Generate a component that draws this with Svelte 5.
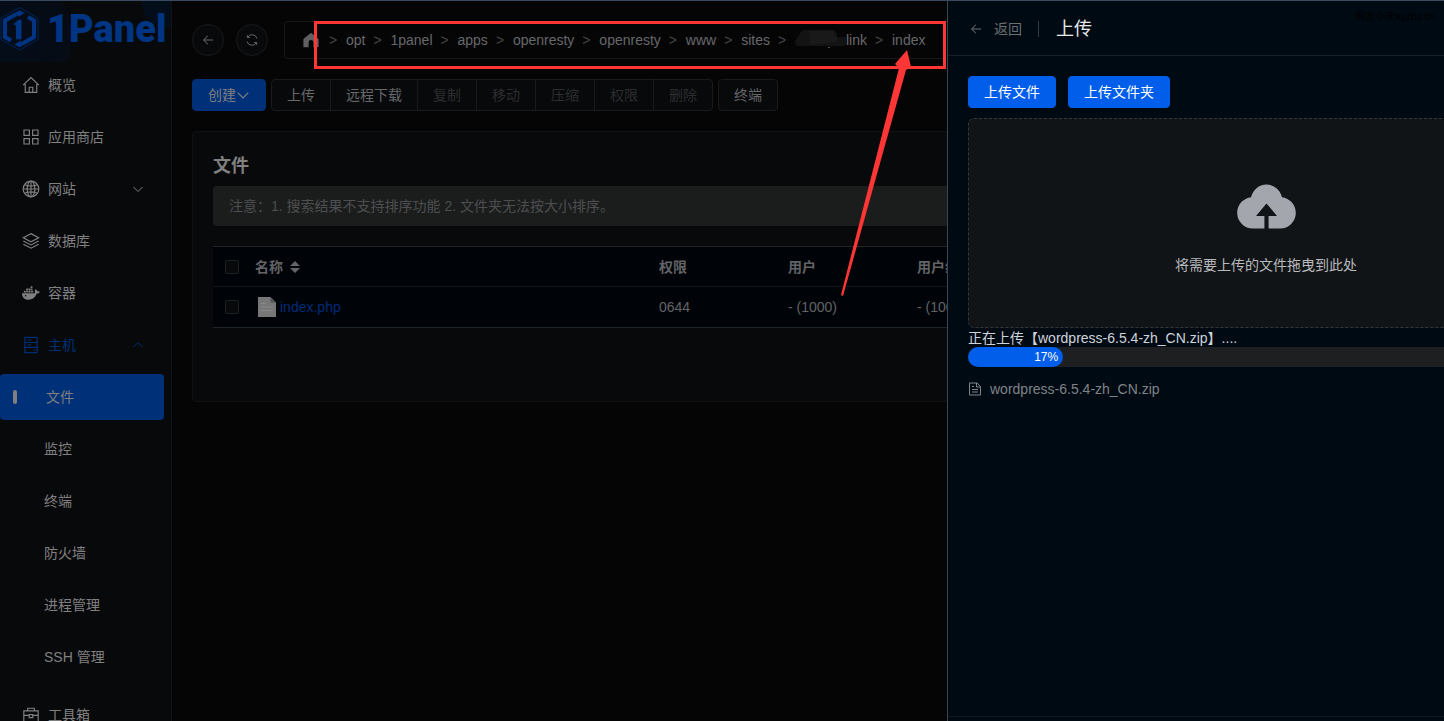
<script>
  const menu = [
    { icon: 'home', label: '概览' },
    { icon: 'grid', label: '应用商店' },
    { icon: 'globe', label: '网站', arrow: 'down' },
    { icon: 'layers', label: '数据库' },
    { icon: 'docker', label: '容器' },
    { icon: 'server', label: '主机', arrow: 'up', open: true }
  ];
  const submenu = ['文件', '监控', '终端', '防火墙', '进程管理', 'SSH 管理'];
  const crumbs = ['opt', '1panel', 'apps', 'openresty', 'openresty', 'www', 'sites', 'link', 'index'];
  const actions = [
    { label: '上传', on: true },
    { label: '远程下载', on: true },
    { label: '复制' },
    { label: '移动' },
    { label: '压缩' },
    { label: '权限' },
    { label: '删除' }
  ];
  const files = [{ name: 'index.php', mode: '0644', user: '- (1000)', group: '- (1000)' }];
  const progress = 17;
  const uploading = 'wordpress-6.5.4-zh_CN.zip';
</script>

{#snippet menuIcon(name)}
  <svg class="menu-icon" viewBox="0 0 20 20" fill="none" stroke="currentColor" stroke-width="1.3" aria-hidden="true">
    {#if name === 'home'}
      <path d="M1.2 10.2 10 1.8l8.800 8.400M3.600 9v9.200h12.800V9M8 18v-5.500h4V18" />
    {:else if name === 'grid'}
      <path d="M2.200 2.200h6v6h-6zM11.800 2.200h6v6h-6zM2.200 11.800h6v6h-6zM11.800 11.800h6v6h-6z" />
    {:else if name === 'globe'}
      <circle cx="10" cy="10" r="8.700" />
      <ellipse cx="10" cy="10" rx="4.300" ry="8.700" />
      <path d="M10 1.300v17.400M1.300 10h17.400M2.900 5.300c4 1.600 10.200 1.600 14.200 0M2.900 14.700c4-1.600 10.200-1.600 14.200 0" />
    {:else if name === 'layers'}
      <path d="m10 1.800 8.500 4.500-8.500 4.500-8.500-4.500zM1.500 10l8.500 4.400 8.500-4.400M1.500 13.500 10 18l8.500-4.500" />
    {:else if name === 'docker'}
      <path fill="currentColor" stroke="none" d="M0 10.200h14.600c-.7-1.300-.5-2.600 0-3.600l.8-.9c1 .6 1.500 1.400 1.700 2.400 1.100-.2 2.200 0 2.900.6-.7 1.500-2 2-3.600 1.900C14.600 15.300 11.500 17.500 7.300 17.500 2.500 17.500 0 14.600 0 10.200zM2 7.400h2.200v2.100H2zM4.700 7.400h2.200v2.100H4.700zM7.400 7.400h2.200v2.100H7.400zM10.100 7.400h2.200v2.100h-2.200zM4.700 4.900h2.200V7H4.700zM7.400 4.900h2.200V7H7.400zM10.100 4.900h1.500V7h-1.500zM9.600 2.400h2v2.100h-2z" />
      <circle cx="4" cy="13" r=".9" fill="#08090b" stroke="none" />
    {:else if name === 'server'}
      <path d="M3.200 1.500h13.600v17H3.200zM3.200 7.200h13.600M3.200 12.700h13.600M6 4.400h4.500M6 10h4.500M13 15.700h1.800" />
    {:else}
      <path d="M2 5.500h16v13H2zM6.300 5.500v-3h7.400v3M2 10.500h6m4 0h6M8 9.500h4v3.500H8z" />
    {/if}
  </svg>
{/snippet}

{#snippet chevron(up)}
  <svg class="chevron" viewBox="0 0 12 12" fill="none" stroke="currentColor" aria-hidden="true">
    <path d={up ? 'm1.500 8 4.500-4.500L10.500 8' : 'm1.500 4 4.500 4.500L10.500 4'} />
  </svg>
{/snippet}

{#snippet backArrow()}
  <svg class="back-icon" viewBox="0 0 1024 1024" fill="currentColor" aria-hidden="true">
    <path d="M224 480h640a32 32 0 1 1 0 64H224a32 32 0 0 1 0-64" />
    <path d="m237.248 512 265.408 265.344a32 32 0 0 1-45.312 45.312l-288-288a32 32 0 0 1 0-45.312l288-288a32 32 0 1 1 45.312 45.312z" />
  </svg>
{/snippet}

<div class="app">
  <aside>
    <div class="logo">
      <svg viewBox="0 0 40 46" fill="none" aria-hidden="true">
        <path d="M19.500 1.500 38 12v21.500L19.500 44 1 33.500V12z" stroke="#002454" stroke-width="1" />
        <path d="M16.500 8 5 14.500v16.500l6 3.500M22.500 37.500l11.500-6.500V14.500l-6-3.500" stroke="#003584" stroke-width="4" />
        <path d="m15.500 6.500 4-2.200 5 2.800-6 3.600zM23.500 39l-4 2.200-5-2.800 6-3.600z" fill="#003584" />
        <path d="m13.500 18.300 5-4.600h3v19.500H16V19.500z" fill="#003584" />
      </svg>
      <span>1Panel</span>
    </div>
    <nav>
      {#each menu as item}
        <a href="#{item.icon}" class="item" class:open={item.open}>
          {@render menuIcon(item.icon)}
          <span>{item.label}</span>
          {#if item.arrow}{@render chevron(item.arrow === 'up')}{/if}
        </a>
      {/each}
      <div class="sub">
        {#each submenu as label, i}
          <a href="#host-{i}" class="item" class:active={i === 0}>{label}</a>
        {/each}
      </div>
      <a href="#toolbox" class="item">
        {@render menuIcon('toolbox')}
        <span>工具箱</span>
      </a>
    </nav>
  </aside>

  <main>
    <div class="path-row">
      <button class="round" aria-label="返回上级">{@render backArrow()}</button>
      <button class="round" aria-label="刷新">
        <svg viewBox="0 0 14 14" fill="none" stroke="currentColor" aria-hidden="true">
          <path d="M2.300 4.500V2.200M2.300 4.500h2.500M2.500 4.300A5.200 5.200 0 0 1 12 5.500M11.700 9.500v2.300M11.700 9.500H9.200M11.500 9.700A5.200 5.200 0 0 1 2 8.500" />
        </svg>
      </button>
      <div class="crumbs">
        <a href="#root" aria-label="根目录">
          <svg class="root-icon" viewBox="0 0 16 16" fill="currentColor" aria-hidden="true">
            <path d="M8 .800 15.600 7v8.200H10.400V10.500a2.400 2.400 0 0 0-4.800 0v4.700H.400V7z" />
          </svg>
        </a>
        {#each crumbs as crumb, i}
          <span class="sep">&gt;</span>
          <a href="#path-{i}">
            {#if crumb === 'link'}
              <svg class="smudge" viewBox="0 0 51 20" aria-hidden="true">
                <path fill="#131314" d="M0 11 6 2q1-2 5-2h27q4 1 4 7h9v8q-4 2-12 1H2q-2-1-2-5z" />
                <path fill="#19191a" d="M15 1h23l4 6v5l-27 3z" />
                <path fill="#555" d="M33 17h2v1h-2z" />
              </svg>
            {/if}{crumb}
          </a>
        {/each}
      </div>
    </div>

    <div class="toolbar">
      <button class="create">创建{@render chevron(false)}</button>
      <div class="group">
        {#each actions as action}
          <button disabled={!action.on}>{action.label}</button>
        {/each}
      </div>
      <button class="plain">终端</button>
    </div>

    <section class="card">
      <h2>文件</h2>
      <p class="notice">注意：1. 搜索结果不支持排序功能 2. 文件夹无法按大小排序。</p>
      <table>
        <colgroup>
          <col class="c-check" /><col class="c-name" /><col class="c-field" /><col class="c-field" /><col />
        </colgroup>
        <thead>
          <tr>
            <th><input type="checkbox" aria-label="全选" /></th>
            <th>
              <span class="sortable">
                名称
                <svg viewBox="0 0 10 12" fill="currentColor" aria-hidden="true">
                  <path d="M5 0l5 5H0zM5 12l5-5H0z" />
                </svg>
              </span>
            </th>
            <th>权限</th>
            <th>用户</th>
            <th>用户组</th>
          </tr>
        </thead>
        <tbody>
          {#each files as file}
            <tr>
              <td><input type="checkbox" aria-label={file.name} /></td>
              <td>
                <a class="file" href="#file">
                  <svg viewBox="0 0 18 20" aria-hidden="true">
                    <path fill="#777778" d="M0 0h12.500L18 5.500V20H0z" />
                    <path fill="#555556" d="M12.500 0v5.500H18z" />
                    <path stroke="#8a8a8b" d="M3 6.500h5M3 10h12M3 13.500h12" />
                  </svg>
                  {file.name}
                </a>
              </td>
              <td>{file.mode}</td>
              <td>{file.user}</td>
              <td>{file.group}</td>
            </tr>
          {/each}
        </tbody>
      </table>
    </section>
  </main>

  <div class="drawer" role="dialog" aria-label="上传">
    <header>
      <button class="back">{@render backArrow()}返回</button>
      <h1>上传</h1>
    </header>
    <div class="body">
      <div class="buttons">
        <button>上传文件</button>
        <button>上传文件夹</button>
      </div>
      <div class="drop">
        <svg viewBox="0 0 1024 1024" fill="#a3a6ad" aria-hidden="true">
          <path d="M544 864V672h128L512 480 352 672h128v192H320v-1.600c-5.376.320-10.496 1.600-16 1.600A240 240 0 0 1 64 624c0-123.136 93.120-223.488 212.608-237.248A239.808 239.808 0 0 1 512 192a239.872 239.872 0 0 1 235.456 194.752c119.488 13.760 212.480 114.112 212.480 237.248a240 240 0 0 1-240 240c-5.376 0-10.560-1.280-16-1.600v1.600z" />
        </svg>
        <span>将需要上传的文件拖曳到此处</span>
      </div>
      <p class="status">正在上传【{uploading}】....</p>
      <div class="bar" role="progressbar" aria-label="上传进度" aria-valuenow={progress}>
        <div class="fill" style="width: {progress}%">{progress}%</div>
      </div>
      <div class="upload-item">
        <svg viewBox="0 0 14 14" fill="none" stroke="currentColor" aria-hidden="true">
          <path d="M1.500 1h7.500l3.500 3.500V13h-11zM8.500 1v4h4M4 4.500h2M4 7.500h6M4 10h6" />
        </svg>
        {uploading}
      </div>
    </div>
    <footer></footer>
  </div>
  <span class="watermark">网友小宋xyzbz.cn</span>

  <svg class="marker" viewBox="0 0 632 276" aria-hidden="true">
    <rect x="1.500" y="1.500" width="629" height="45" fill="none" stroke="#ff3636" stroke-width="3" />
    <path fill="#ff3636" d="M593 29 581 43l4 4L527 274l2 1L592 49l5-3z" />
  </svg>
</div>

<style>
  :global(body) {
    overflow: hidden;
    background: #050505;
  }
  .app {
    position: relative;
    display: flex;
    height: 100vh;
    overflow: hidden;
    box-sizing: border-box;
    border-top: 1px solid #3a4a60;
    font: 14px/20px 'Liberation Sans', 'Noto Sans CJK SC', sans-serif;
    color: #67686b;
  }
  a {
    color: inherit;
    text-decoration: none;
  }
  button {
    box-sizing: border-box;
    font: inherit;
    color: inherit;
    padding: 0 15px;
    height: 32px;
    border: 1px solid #1a1a1c;
    border-radius: 4px;
    background: #08090a;
    white-space: nowrap;
  }
  h1, h2, p {
    margin: 0;
  }

  aside {
    flex: 0 0 171px;
    border-right: 1px solid #111214;
    background: #08090b;
  }
  .logo {
    display: flex;
    align-items: center;
    gap: 7px;
    height: 61px;
    box-sizing: border-box;
    padding-bottom: 6px;
    background:
      radial-gradient(circle at 168px 0, #040d1a 26px, transparent 27px),
      radial-gradient(circle at 0 36px, #040d1a, #060b14 71px, transparent 72px);
  }
  .logo svg {
    width: 40px;
    height: 46px;
  }
  .logo span {
    font: 900 38px/40px Roboto, sans-serif;
    color: #003584;
  }
  .item {
    display: flex;
    align-items: center;
    height: 46px;
    margin: 0 7px 6px 0;
    padding-left: 22px;
    color: #808080;
  }
  .menu-icon {
    width: 18px;
    height: 18px;
    margin-right: 8px;
  }
  .chevron {
    width: 12px;
    height: 12px;
  }
  .item .chevron {
    margin-left: auto;
    margin-right: 20px;
  }
  .open {
    color: #002f76;
  }
  .sub {
    padding-bottom: 6px;
  }
  .sub .item {
    padding-left: 44px;
  }
  .sub .active {
    padding-left: 13px;
    border-radius: 4px;
    background: #003078;
  }
  .active::before {
    content: '';
    width: 4px;
    height: 14px;
    margin-right: 29px;
    border-radius: 2px;
    background: #808080;
  }

  main {
    flex: 1;
    min-width: 0;
    padding: 20px 20px 0;
  }
  .path-row {
    display: flex;
    align-items: center;
  }
  .round {
    flex: none;
    display: grid;
    place-items: center;
    width: 32px;
    padding: 0;
    margin-right: 12px;
    border-radius: 50%;
  }
  .round svg, .back-icon {
    width: 14px;
    height: 14px;
  }
  .crumbs {
    flex: 1;
    display: flex;
    align-items: center;
    height: 36px;
    margin-left: 4px;
    padding-left: 18px;
    border: 1px solid #17181a;
    border-radius: 4px;
  }
  .crumbs a {
    display: flex;
    align-items: center;
  }
  .root-icon {
    width: 16px;
    height: 16px;
    margin-right: 2px;
    color: #606063;
  }
  .sep {
    width: 9px;
    margin: 0 8px;
    color: #444548;
  }
  .smudge {
    width: 51px;
    height: 20px;
  }

  .toolbar {
    display: flex;
    gap: 5px;
    margin-top: 20px;
  }
  .create {
    display: flex;
    align-items: center;
    border-color: #003078;
    background: #003078;
    color: #808080;
  }
  .create .chevron {
    width: 14px;
    height: 14px;
  }
  .group {
    display: flex;
  }
  .group button {
    border-radius: 0;
  }
  .group button + button {
    margin-left: -1px;
  }
  .group button:first-child {
    border-radius: 4px 0 0 4px;
  }
  .group button:last-child {
    border-radius: 0 4px 4px 0;
  }
  button:disabled {
    color: #2c2d2f;
  }

  .card {
    box-sizing: border-box;
    margin-top: 20px;
    padding: 20px 20px 73px;
    border: 1px solid #101113;
    border-radius: 4px;
    background: #08090a;
  }
  h2 {
    font-size: 18px;
    line-height: 28px;
    color: #808080;
  }
  .notice {
    margin: 6px 0 20px;
    padding: 10px 16px;
    border-radius: 4px;
    background: #1b1d1c;
    color: #4d4e50;
  }
  table {
    width: 100%;
    table-layout: fixed;
    border-collapse: collapse;
    border-top: 1px solid #222527;
    border-bottom: 1px solid #222527;
    background: #000408;
    color: #626366;
  }
  .c-check {
    width: 30px;
  }
  .c-name {
    width: 404px;
  }
  .c-field {
    width: 129px;
  }
  th, td {
    height: 40px;
    box-sizing: border-box;
    padding: 0 12px;
    text-align: left;
    white-space: nowrap;
  }
  td {
    height: 41px;
  }
  th {
    border-bottom: 1px solid #121518;
  }
  th:first-child, td:first-child {
    padding-right: 0;
  }
  input {
    display: block;
    appearance: none;
    width: 14px;
    height: 14px;
    box-sizing: border-box;
    margin: 0;
    border: 1px solid #1d1f21;
    border-radius: 2px;
    background: #08090a;
  }
  .sortable, .file {
    display: flex;
    align-items: center;
    gap: 7px;
  }
  .sortable svg {
    width: 10px;
    height: 12px;
  }
  .file {
    gap: 4px;
    padding-left: 3px;
    color: #002b78;
  }
  .file svg {
    width: 18px;
    height: 20px;
  }

  .drawer {
    position: absolute;
    top: 0;
    bottom: 0;
    left: 947px;
    right: 0;
    display: flex;
    flex-direction: column;
    overflow: hidden;
    border-left: 1px solid #3a4654;
    background: #000a13;
  }
  header {
    display: flex;
    align-items: center;
    height: 54px;
    box-sizing: border-box;
    padding: 2px 0 0 21px;
  }
  .back {
    display: flex;
    align-items: center;
    gap: 11px;
    height: 16px;
    margin-right: 17px;
    padding: 0 16px 0 0;
    border: 0;
    border-right: 1px solid #343a41;
    border-radius: 0;
    background: none;
    color: #6b7075;
  }
  h1 {
    font-size: 18px;
    line-height: 26px;
    font-weight: 400;
    color: #e8eaec;
  }
  .body {
    flex: 1;
    width: 596px;
    padding: 20px;
    border-top: 1px solid #172028;
  }
  .buttons {
    display: flex;
    gap: 12px;
    margin-bottom: 10px;
  }
  .buttons button {
    border-color: #005eeb;
    background: #005eeb;
    color: #fff;
  }
  .drop {
    display: flex;
    flex-direction: column;
    align-items: center;
    gap: 16px;
    height: 210px;
    box-sizing: border-box;
    padding-top: 53px;
    border: 1px dashed #34373a;
    border-radius: 6px;
    background: #111416;
    color: #b8babd;
  }
  .drop svg {
    width: 67px;
    height: 67px;
  }
  .status {
    height: 19px;
    color: #cfd3dc;
  }
  .bar {
    width: 560px;
    height: 20px;
    border-radius: 10px;
    background: #1d1f21;
  }
  .fill {
    box-sizing: border-box;
    padding-right: 5px;
    border-radius: 10px;
    background: #005eeb;
    color: #fff;
    font-size: 12px;
    text-align: right;
  }
  .upload-item {
    display: flex;
    align-items: center;
    gap: 8px;
    margin-top: 12px;
    color: #7f8388;
  }
  .upload-item svg {
    width: 14px;
    height: 14px;
  }
  footer {
    height: 4px;
    border-top: 1px solid #101820;
  }
  .watermark {
    position: absolute;
    top: 5px;
    right: 9px;
    font-family: 'Noto Sans', 'Noto Sans CJK SC', sans-serif;
    font-size: 10px;
    color: #000;
  }
  .marker {
    position: absolute;
    top: 20px;
    left: 314px;
    width: 632px;
    height: 276px;
    pointer-events: none;
  }
</style>
